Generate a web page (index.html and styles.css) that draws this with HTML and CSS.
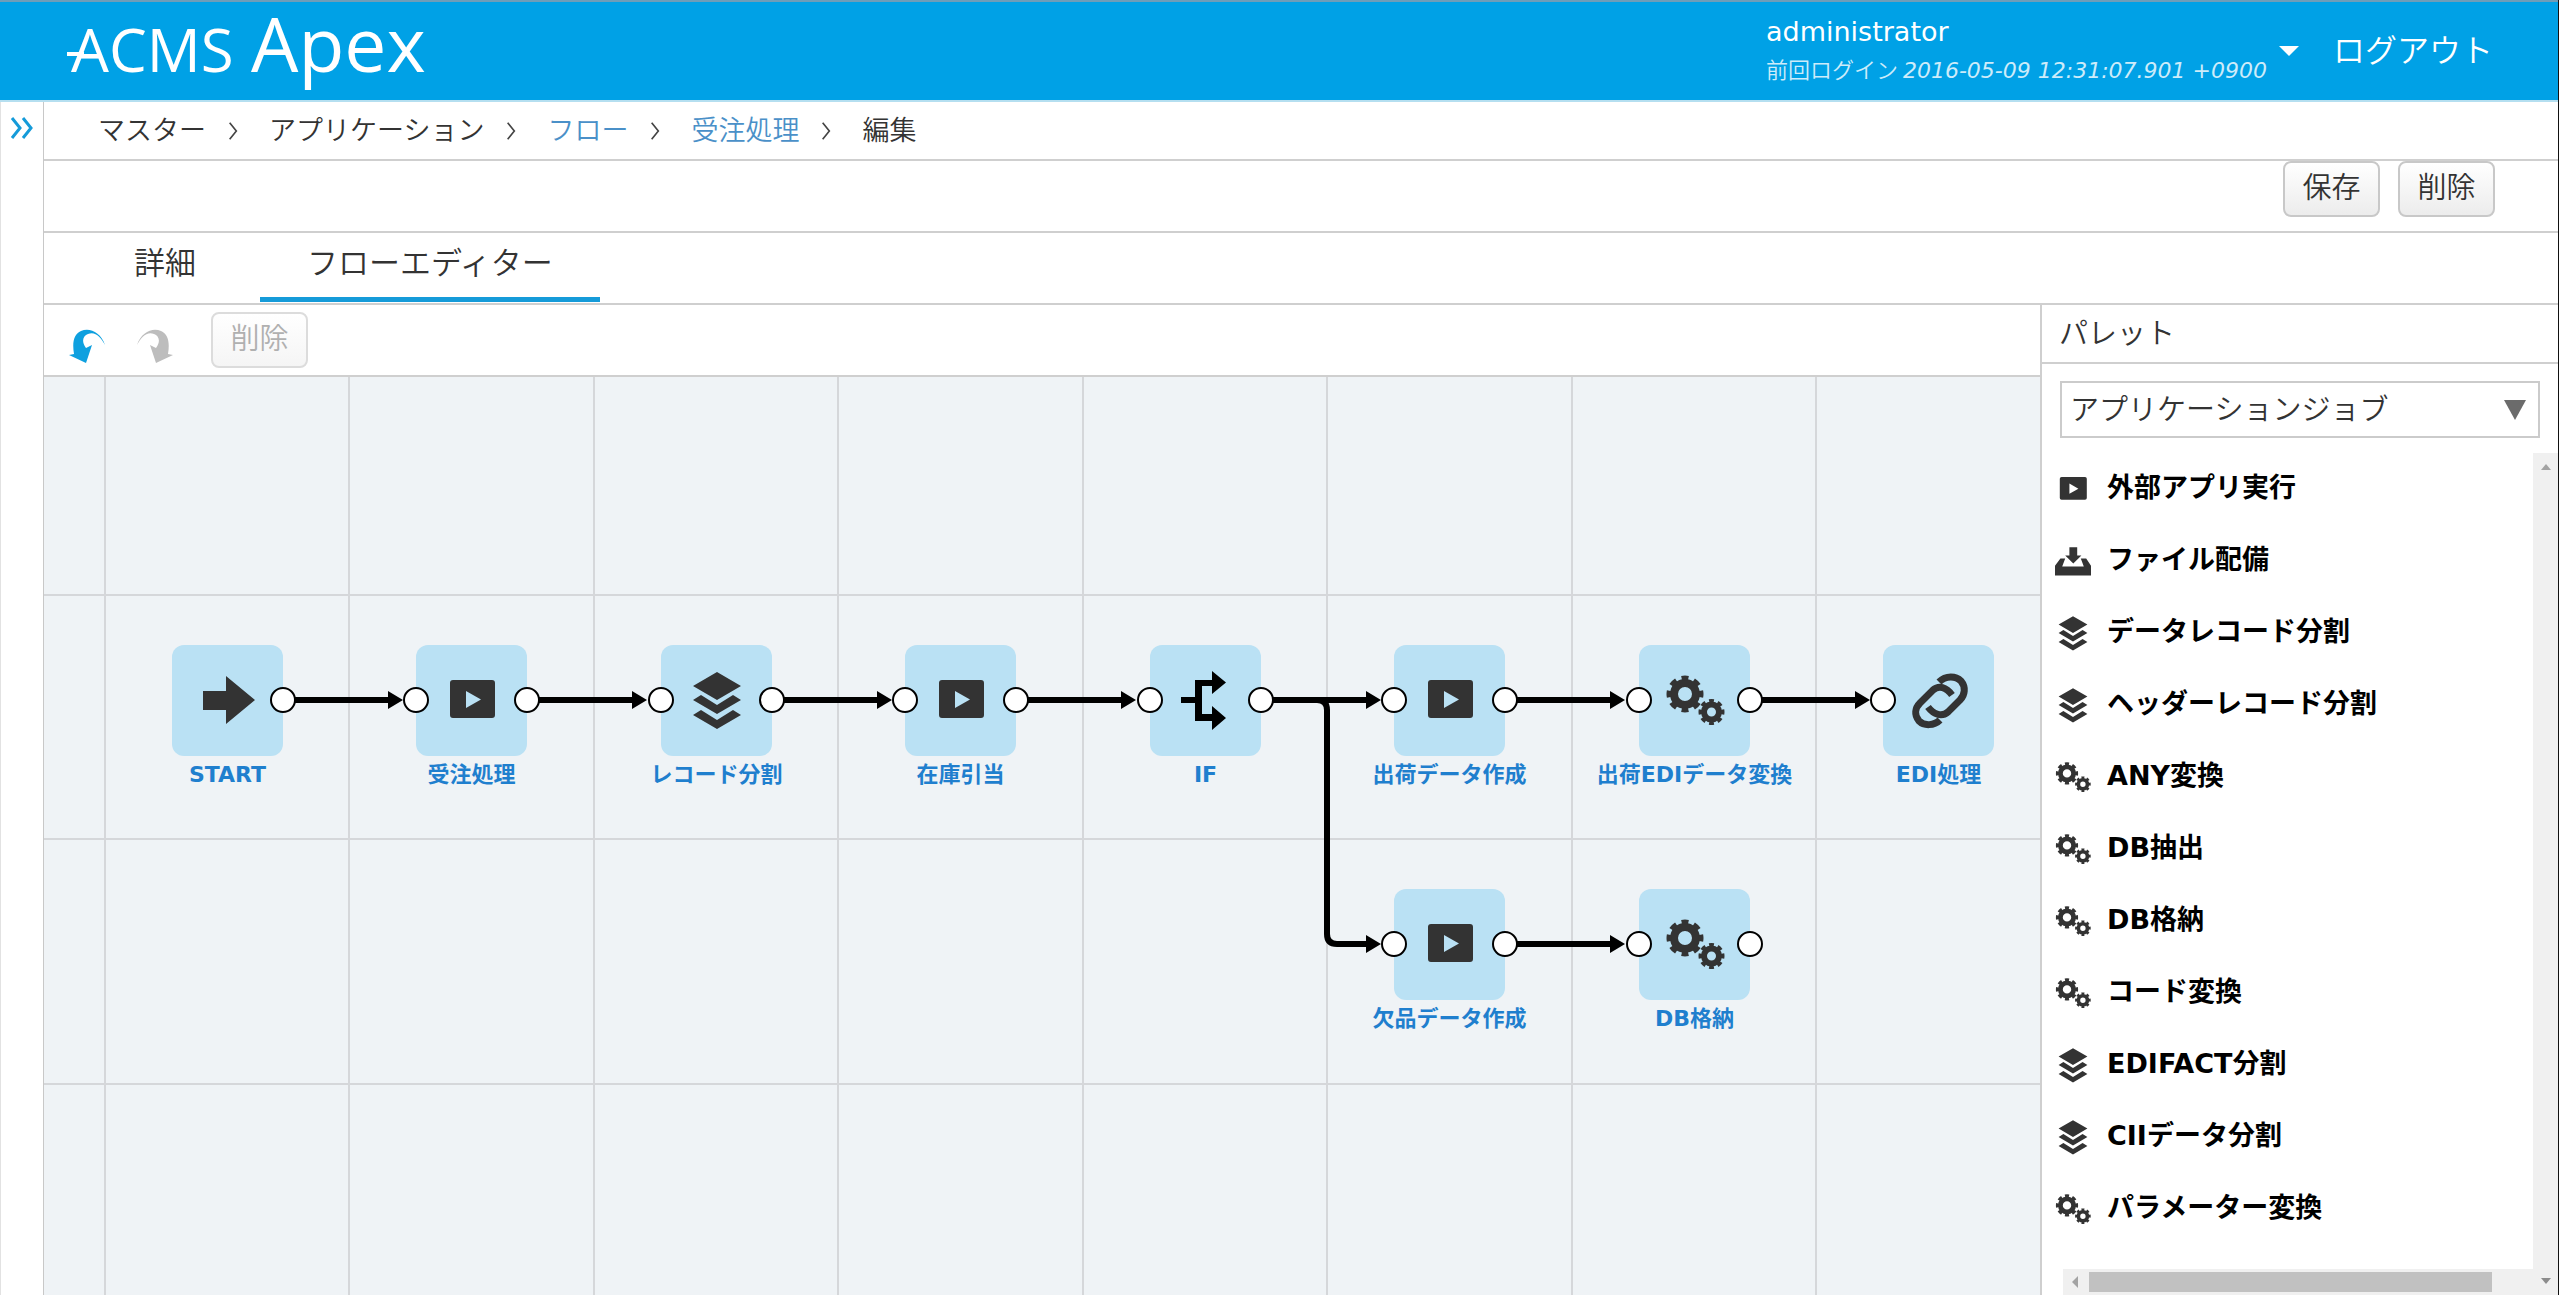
FILE: index.html
```html
<!DOCTYPE html>
<html lang="ja">
<head>
<meta charset="utf-8">
<title>ACMS Apex - フローエディター</title>
<link rel="stylesheet" href="styles.css">
</head>
<body>
<svg class="sprite" aria-hidden="true">
  <symbol id="i-start" viewBox="0 0 60 60"><path d="M5 21H28V6L57 30L28 54V40H5Z" fill="#333"/></symbol>
  <symbol id="i-app" viewBox="0 0 60 60"><path fill-rule="evenodd" d="M11 10H50Q53 10 53 13V45Q53 48 50 48H11Q8 48 8 45V13Q8 10 11 10ZM24 21V38L39 29.500Z" fill="#333"/></symbol>
  <symbol id="i-layers" viewBox="0 0 60 60"><path d="M30 2L54 16L30 30L6 16ZM6 30L14 25L30 35L46 25L54 30L30 44ZM6 45L14 40L30 50L46 40L54 45L30 59Z" fill="#333"/></symbol>
  <symbol id="i-if" viewBox="0 0 60 60"><path d="M5 27H19V10H36V1L50 12.500L36 24V16H26V44H36V36L50 48L36 60V51H19V33H5Z" fill="#000"/></symbol>
  <symbol id="i-gears" viewBox="0 0 60 60"><g fill="none" stroke="#333">
    <circle cx="20" cy="24" r="11" stroke-width="8"/>
    <circle cx="20" cy="24" r="16" stroke-width="5" pathLength="16" stroke-dasharray="1.1 .9" stroke-dashoffset=".55"/>
    <circle cx="46.500" cy="42" r="7.500" stroke-width="6"/>
    <circle cx="46.500" cy="42" r="11" stroke-width="4" pathLength="16" stroke-dasharray="1.1 .9" stroke-dashoffset=".55"/></g></symbol>
  <symbol id="i-link" viewBox="0 0 60 60"><g fill="none" stroke="#333" stroke-width="7">
    <path d="M30 12C37 5 47 6 52 11C57 17 56 25 51 30L39 42C33 47 25 45 19 37"/>
    <path d="M31 50C25 56 15 56 10 51C5 45 6 38 11 33L24 20C30 15 37 17 43 25"/></g></symbol>
  <symbol id="i-deploy" viewBox="0 0 60 60"><path d="M24 7H37V21H44L30.500 34L17 21H24ZM0 54V38L9 26H17L12 39H48L43 26H52L60 38V54Z" fill="#333"/></symbol>
  <symbol id="i-sep" viewBox="0 0 12 24"><path d="M2 2L10 12L2 22" fill="none" stroke="#444" stroke-width="2"/></symbol>
  <symbol id="i-turn" viewBox="0 0 36 36"><path d="M36 16C32 3 20 -2 12 2C5 5 3 13 5 25L0 26L17 34L23 16L17 19C12 12 14 7 19 5C26 2 32 8 36 16Z" fill="currentColor"/></symbol>
</svg>

<div class="app">
  <header class="topbar">
    <svg class="logo" viewBox="0 0 370 92" role="img" aria-label="ACMS Apex">
      <text class="logo-text" x="11" y="67" font-size="60">ACMS</text>
      <text class="logo-text" x="191" y="67" font-size="75">Apex</text>
      <path d="M7 49H24" stroke="#fff" stroke-width="4"/>
    </svg>
    <div class="account">
      <button class="user" type="button">
        <span class="user-text">
          <span class="user-name">administrator</span>
          <span class="user-login">前回ログイン <em>2016-05-09 12:31:07.901 +0900</em></span>
        </span>
        <svg class="caret" viewBox="0 0 20 10" aria-hidden="true"><path d="M0 0H20L10 10Z" fill="#fff"/></svg>
      </button>
      <a class="logout" href="#">ログアウト</a>
    </div>
  </header>

  <div class="body">
    <aside class="rail">
      <button class="expand" type="button" aria-label="メニューを開く">
        <svg viewBox="0 0 24 24" aria-hidden="true"><path d="M2 2L10 12L2 22M13 2L21 12L13 22" fill="none" stroke="#159bd9" stroke-width="3"/></svg>
      </button>
    </aside>
    <main class="content">
      <nav class="crumbs" aria-label="パンくず">
        <span>マスター</span><svg class="sep"><use href="#i-sep"/></svg>
        <span>アプリケーション</span><svg class="sep"><use href="#i-sep"/></svg>
        <a href="#">フロー</a><svg class="sep"><use href="#i-sep"/></svg>
        <a href="#">受注処理</a><svg class="sep"><use href="#i-sep"/></svg>
        <span>編集</span>
      </nav>
      <div class="actions">
        <button class="btn" type="button">保存</button>
        <button class="btn" type="button">削除</button>
      </div>
      <nav class="tabs">
        <a class="tab" href="#">詳細</a>
        <a class="tab active" href="#">フローエディター</a>
      </nav>
      <div class="work">
        <section class="editor">
          <div class="tools">
            <button class="tool undo" type="button" aria-label="元に戻す"><svg><use href="#i-turn"/></svg></button>
            <button class="tool redo" type="button" aria-label="やり直し" disabled><svg><use href="#i-turn"/></svg></button>
            <button class="btn" type="button" disabled>削除</button>
          </div>
          <div class="canvas">
            <svg class="wires" aria-hidden="true">
              <g class="grid">
                <path d="M61 0V4000M305 0V4000M550 0V4000M794 0V4000M1039 0V4000M1283 0V4000M1528 0V4000M1772 0V4000"/>
                <path d="M0 218H4000M0 462H4000M0 707H4000"/>
              </g>
              <g class="wire">
                <path d="M239 323H345M483 323H589M728 323H834M972 323H1078M1217 323H1323M1461 323H1567M1706 323H1812"/>
                <path d="M1217 323H1273Q1283 323 1283 333V557Q1283 567 1293 567H1323M1461 567H1567"/>
              </g>
              <path d="M344 314L359 323L344 332ZM588 314L603 323L588 332ZM833 314L848 323L833 332ZM1077 314L1092 323L1077 332ZM1322 314L1337 323L1322 332ZM1566 314L1581 323L1566 332ZM1811 314L1826 323L1811 332ZM1322 558L1337 567L1322 576ZM1566 558L1581 567L1566 576Z"/>
            </svg>
            <div class="node c1 r1"><div class="box"><svg class="icon"><use href="#i-start"/></svg><i class="port out"></i></div><span>START</span></div>
            <div class="node c2 r1"><div class="box"><svg class="icon"><use href="#i-app"/></svg><i class="port in"></i><i class="port out"></i></div><span>受注処理</span></div>
            <div class="node c3 r1"><div class="box"><svg class="icon"><use href="#i-layers"/></svg><i class="port in"></i><i class="port out"></i></div><span>レコード分割</span></div>
            <div class="node c4 r1"><div class="box"><svg class="icon"><use href="#i-app"/></svg><i class="port in"></i><i class="port out"></i></div><span>在庫引当</span></div>
            <div class="node c5 r1"><div class="box"><svg class="icon"><use href="#i-if"/></svg><i class="port in"></i><i class="port out"></i></div><span>IF</span></div>
            <div class="node c6 r1"><div class="box"><svg class="icon"><use href="#i-app"/></svg><i class="port in"></i><i class="port out"></i></div><span>出荷データ作成</span></div>
            <div class="node c7 r1"><div class="box"><svg class="icon"><use href="#i-gears"/></svg><i class="port in"></i><i class="port out"></i></div><span>出荷EDIデータ変換</span></div>
            <div class="node c8 r1"><div class="box"><svg class="icon"><use href="#i-link"/></svg><i class="port in"></i></div><span>EDI処理</span></div>
            <div class="node c6 r2"><div class="box"><svg class="icon"><use href="#i-app"/></svg><i class="port in"></i><i class="port out"></i></div><span>欠品データ作成</span></div>
            <div class="node c7 r2"><div class="box"><svg class="icon"><use href="#i-gears"/></svg><i class="port in"></i><i class="port out"></i></div><span>DB格納</span></div>
          </div>
        </section>
        <aside class="palette">
          <h2><label for="kind">パレット</label></h2>
          <div class="picker">
            <select id="kind"><option>アプリケーションジョブ</option></select>
            <svg class="arrow" viewBox="0 0 22 20" aria-hidden="true"><path d="M0 0H22L11 20Z" fill="#6b6b6b"/></svg>
          </div>
          <div class="scroller">
            <div class="pane">
              <ul class="jobs">
                <li><svg><use href="#i-app"/></svg><span>外部アプリ実行</span></li>
                <li><svg><use href="#i-deploy"/></svg><span>ファイル配備</span></li>
                <li><svg><use href="#i-layers"/></svg><span>データレコード分割</span></li>
                <li><svg><use href="#i-layers"/></svg><span>ヘッダーレコード分割</span></li>
                <li><svg><use href="#i-gears"/></svg><span>ANY変換</span></li>
                <li><svg><use href="#i-gears"/></svg><span>DB抽出</span></li>
                <li><svg><use href="#i-gears"/></svg><span>DB格納</span></li>
                <li><svg><use href="#i-gears"/></svg><span>コード変換</span></li>
                <li><svg><use href="#i-layers"/></svg><span>EDIFACT分割</span></li>
                <li><svg><use href="#i-layers"/></svg><span>CIIデータ分割</span></li>
                <li><svg><use href="#i-gears"/></svg><span>パラメーター変換</span></li>
              </ul>
              <div class="hbar"><svg viewBox="0 0 6 12"><path d="M6 0V12L0 6Z" fill="#a3a3a3"/></svg><div class="thumb"></div></div>
            </div>
            <div class="vbar">
              <svg viewBox="0 0 10 6"><path d="M0 6H10L5 0Z" fill="#a3a3a3"/></svg>
              <svg viewBox="0 0 10 6"><path d="M0 0H10L5 6Z" fill="#8c8c8c"/></svg>
            </div>
          </div>
        </aside>
      </div>
    </main>
  </div>
</div>
</body>
</html>
```
FILE: styles.css
```css
* { box-sizing: border-box; }
body {
  margin: 0;
  color: #333;
  background: #fff;
  font-family: "DejaVu Sans", "Noto Sans CJK JP", sans-serif;
  font-size: 27px;
}
button, select { font: inherit; color: inherit; }
a { text-decoration: none; color: inherit; }
.sprite { display: none; }

.app {
  display: flex;
  flex-direction: column;
  height: 100vh;
  overflow: hidden;
  border-right: 1px solid #111;
}

/* Header */
.topbar {
  display: flex;
  flex: none;
  justify-content: space-between;
  height: 102px;
  padding: 0 65px 0 60px;
  background: #00a1e6;
  border-top: 2px solid #6f9db8;
  border-bottom: 2px solid #b5dff0;
}
.logo { width: 370px; height: 92px; margin-top: 3px; }
.logo-text { fill: #fff; font-family: "Open Sans", "Noto Sans", sans-serif; }
.account { display: flex; align-items: center; gap: 34px; }
.user {
  display: flex;
  align-items: center;
  gap: 12px;
  padding: 0;
  border: 0;
  background: none;
  color: #fff;
  text-align: left;
}
.user-text { display: flex; flex-direction: column; }
.user-name { font-size: 27px; line-height: 36px; }
.user-login { font-size: 22px; line-height: 36px; color: #cdecfa; white-space: nowrap; }
.user-login, .logout, .crumbs, .btn, .tab, .palette h2, .picker { font-family: "Noto Sans CJK JP", sans-serif; font-weight: 350; }
.user-login em { font-family: "DejaVu Sans", sans-serif; font-weight: 400; }
.caret { width: 20px; height: 10px; }
.logout { padding-bottom: 6px; color: #fff; font-size: 32px; line-height: 40px; }

/* Frame */
.body { display: flex; flex: 1; min-height: 0; }
.rail {
  flex: none;
  width: 44px;
  padding-top: 14px;
  border-left: 1px solid #e2e2e2;
  border-right: 1px solid #c8c8c8;
}
.expand { display: block; padding: 0 8px; border: 0; background: none; }
.expand svg { display: block; width: 26px; height: 24px; }
.content { display: flex; flex: 1; flex-direction: column; min-width: 0; }

.crumbs {
  display: flex;
  align-items: center;
  height: 59px;
  padding: 0 54px 4px;
  border-bottom: 2px solid #cfcfcf;
  line-height: 40px;
}
.crumbs a { color: #4a90c8; }
.sep { width: 12px; height: 20px; margin: 4px 30px 0 21px; }

.actions {
  display: flex;
  justify-content: flex-end;
  gap: 18px;
  height: 72px;
  padding-right: 63px;
  border-bottom: 2px solid #cfcfcf;
}
.btn {
  width: 97px;
  height: 56px;
  padding: 0 0 8px;
  border: 2px solid #c8c8c8;
  border-radius: 8px;
  background: linear-gradient(#fff, #ececec);
  font-size: 29px;
}
.btn:disabled { color: #b0b0b0; border-color: #dcdcdc; background: linear-gradient(#fff, #f5f5f5); }

.tabs {
  display: flex;
  gap: 17px;
  height: 72px;
  padding-left: 43px;
  border-bottom: 2px solid #cfcfcf;
}
.tab {
  height: 69px;
  padding: 4px 47px 0;
  border-bottom: 5px solid transparent;
  font-size: 31px;
  line-height: 48px;
}
.tab.active { border-color: #159bd9; }

.work { display: flex; flex: 1; min-height: 0; }
.editor { display: flex; flex: 1; flex-direction: column; min-width: 0; }
.tools {
  display: flex;
  flex: none;
  height: 72px;
  padding: 7px 25px;
  border-bottom: 2px solid #cfcfcf;
}
.tool { width: 37px; height: 36px; padding: 0; border: 0; background: none; margin: 17px 31px 0 0; }
.tool svg { display: block; width: 36px; height: 36px; }
.undo { color: #0ea0df; }
.redo { color: #bdbdbd; }
.tools .btn { margin-left: 6px; }
.redo svg { transform: scaleX(-1); }

/* Flow canvas */
.canvas { position: relative; flex: 1; overflow: hidden; background: #eff3f6; }
.wires { position: absolute; inset: 0; width: 100%; height: 100%; }
.grid { fill: none; stroke: #d5d7da; stroke-width: 2; }
.wire { fill: none; stroke: #000; stroke-width: 6; }
.node {
  position: absolute;
  display: flex;
  flex-direction: column;
  align-items: center;
  gap: 5px;
  width: 111px;
  color: #1f7fce;
  font-size: 22px;
  font-weight: 700;
  line-height: 28px;
  white-space: nowrap;
}
.c1 { left: 128px; }
.c2 { left: 372px; }
.c3 { left: 617px; }
.c4 { left: 861px; }
.c5 { left: 1106px; }
.c6 { left: 1350px; }
.c7 { left: 1595px; }
.c8 { left: 1839px; }
.r1 { top: 268px; }
.r2 { top: 512px; }
.box {
  position: relative;
  display: grid;
  place-items: center;
  width: 111px;
  height: 111px;
  border-radius: 12px;
  background: #bae1f4;
}
.icon { width: 60px; height: 60px; margin-bottom: 1px; }
.port {
  position: absolute;
  top: 42px;
  width: 26px;
  height: 26px;
  border: 2px solid #000;
  border-radius: 50%;
  background: #fff;
}
.in { left: -13px; }
.out { right: -13px; }

/* Palette */
.palette {
  display: flex;
  flex: none;
  flex-direction: column;
  width: 518px;
  border-left: 2px solid #cfcfcf;
  font-size: 29px;
}
.palette h2 {
  margin: 0;
  height: 59px;
  padding: 0 17px;
  border-bottom: 2px solid #cfcfcf;
  font-size: 29px;
  line-height: 52px;
}
.picker { position: relative; margin: 17px 18px 15px 18px; }
.picker select {
  display: block;
  width: 100%;
  height: 57px;
  padding: 0 40px 6px 8px;
  border: 2px solid #cbcbcb;
  border-radius: 0;
  background: #fff;
  appearance: none;
}
.arrow { position: absolute; top: 19px; right: 14px; width: 22px; height: 20px; pointer-events: none; }
.scroller { display: flex; flex: 1; min-height: 0; }
.pane { display: flex; flex: 1; flex-direction: column; min-width: 0; }
.jobs { flex: 1; min-height: 0; margin: 0; padding: 0 0 0 13px; overflow: hidden; list-style: none; }
.jobs li {
  display: flex;
  align-items: center;
  gap: 16px;
  height: 72px;
  color: #000;
  font-size: 27px;
  font-weight: 700;
}
.jobs svg { width: 36px; height: 36px; }
.jobs span { padding-bottom: 8px; }
.hbar { display: flex; align-items: center; gap: 11px; height: 26px; margin-left: 21px; padding-left: 9px; background: #f0f0f0; }
.hbar svg { width: 6px; height: 12px; }
.thumb { width: 403px; height: 20px; background: #c1c1c1; }
.vbar {
  display: flex;
  flex-direction: column;
  align-items: center;
  justify-content: space-between;
  width: 25px;
  padding: 11px 0;
  background: #f0f0f0;
}
.vbar svg { width: 10px; height: 6px; }
```
